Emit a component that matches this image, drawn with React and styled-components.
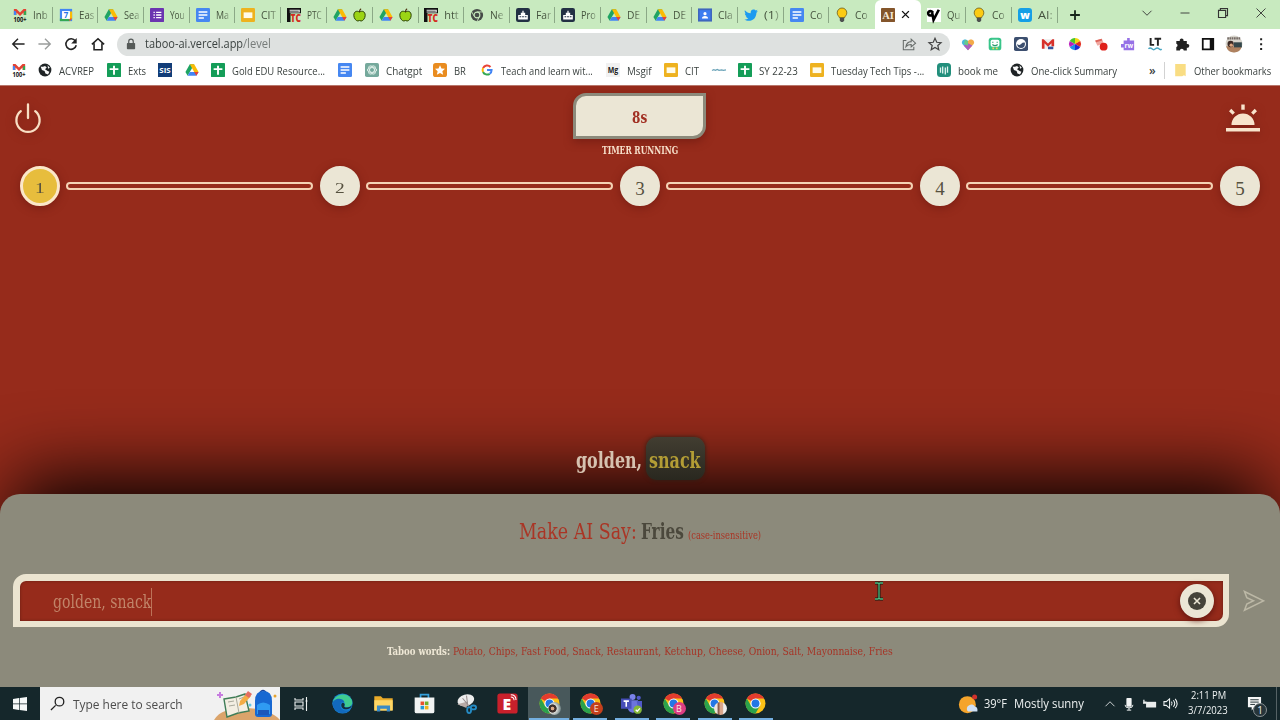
import { useLayoutEffect, useRef, useState } from "react";
import styled, { createGlobalStyle } from "styled-components";

const tabs = [
  ["gmail", "Inb"],
  ["calendar", "Eas"],
  ["drive", "Sea"],
  ["forms", "You"],
  ["docs", "Ma"],
  ["slides", "CIT"],
  ["ptc", "PTC"],
  ["drive", "", "apple"],
  ["drive", "", "apple"],
  ["ptc", "htt"],
  ["chromeDark", "Ne"],
  ["castle", "Far"],
  ["castle", "Pro"],
  ["drive", "DE"],
  ["drive", "DE"],
  ["classroom", "Cla"],
  ["twitter", "(1)"],
  ["docs", "Co"],
  ["bulb", "Co"],
  ["ai", "", "close"],
  ["vv", "Qu"],
  ["bulb", "Co"],
  ["w", "AI:"],
];

// icon, item width, label, label width
const bookmarks = [
  ["gmail", 26],
  ["globe", 69, "ACVREP", 35],
  ["sheets", 51, "Exts", 18],
  ["sis", 27],
  ["drive", 26],
  ["sheets", 127, "Gold EDU Resource...", 93],
  ["docs", 27],
  ["gpt", 68, "Chatgpt", 36],
  ["star", 47, "BR", 12],
  ["google", 126, "Teach and learn wit...", 92],
  ["mg", 58, "Msgif", 25],
  ["slides", 48, "CIT", 14],
  ["script", 26],
  ["sheets", 72, "SY 22-23", 39],
  ["slides", 127, "Tuesday Tech Tips -...", 93],
  ["book", 73, "book me", 40],
  ["globe", 136, "One-click Summary", 86],
];

const extensions = [
  "heart", "bit", "swirl", "mailExt", "wheel", "record", "robot", "lt", "puzzle", "sidebar",
];

const apps = [
  ["taskview"],
  ["edge"],
  ["folder"],
  ["store"],
  ["snip"],
  ["eapp"],
  ["chrome", "photo", true],
  ["chrome", "E"],
  ["teams", null],
  ["chrome", "B"],
  ["chrome", "face"],
  ["chrome", null],
];

export default function App() {
  return (
    <Screen>
      <GlobalStyle />
      <TabStrip />
      <AddressBar />
      <BookmarkBar />
      <Game />
      <TaskBar />
    </Screen>
  );
}

// Squeezes a label to the width of its column
function Fit({ w, children }) {
  const ref = useRef(null);
  const [scale, setScale] = useState(1);
  useLayoutEffect(() => {
    setScale(w / ref.current.offsetWidth);
  }, [w]);
  return (
    <FitBox $w={w}>
      <FitText ref={ref} style={{ transform: `scaleX(${scale})` }}>
        {children}
      </FitText>
    </FitBox>
  );
}

function TabStrip() {
  return (
    <TabBar>
      {tabs.map(([icon, label, extra], i) => (
        <Tab key={i} $active={icon === "ai"} $line={i !== 18 && icon !== "ai"}>
          <Icon name={icon} size={14} />
          {label && (
            <TabLabel>
              <Fit w={label.length === 3 ? 15 : 13}>{label}</Fit>
            </TabLabel>
          )}
          {extra && <Icon name={extra} size={extra === "close" ? 9 : 13} />}
        </Tab>
      ))}
      <NewTab>
        <Icon name="plus" size={12} />
      </NewTab>
      <WindowButtons>
        <Icon name="down" size={12} />
        <Icon name="minimize" size={12} />
        <Icon name="restore" size={12} />
        <Icon name="closeThin" size={12} />
      </WindowButtons>
    </TabBar>
  );
}

function AddressBar() {
  return (
    <Toolbar>
      <NavButtons>
        <Icon name="back" size={14} />
        <Icon name="forward" size={14} />
        <Icon name="reload" size={14} />
        <Icon name="home" size={14} />
      </NavButtons>
      <Omnibox>
        <Icon name="lock" size={12} />
        <Url>
          <Fit w={98}>taboo-ai.vercel.app</Fit>
          <Path>
            <Fit w={28}>/level</Fit>
          </Path>
        </Url>
        <Icon name="share" size={14} />
        <Icon name="starLine" size={14} />
      </Omnibox>
      <Extensions>
        {extensions.map((name) => (
          <Icon key={name} name={name} size={14} />
        ))}
        <Profile>
          <Icon name="avatar" size={18} />
        </Profile>
        <Icon name="dots" size={14} />
      </Extensions>
    </Toolbar>
  );
}

function BookmarkBar() {
  return (
    <Bookmarks>
      {bookmarks.map(([icon, width, label, w], i) => (
        <Bookmark key={i} $w={width}>
          <Icon name={icon} size={14} />
          {label && <Fit w={w}>{label}</Fit>}
        </Bookmark>
      ))}
      <More>»</More>
      <Other>
        <Icon name="note" size={14} />
        <Fit w={77}>Other bookmarks</Fit>
      </Other>
    </Bookmarks>
  );
}

function Game() {
  return (
    <Page>
      <Board>
        <Header>
          <Power viewBox="0 0 32 32">
            <path d="M8.8 9.2a11.6 11.6 0 1 0 14.4 0M16 2.500v13.500" />
          </Power>
          <TimerColumn>
            <Timer>
              <Fit w={15}>8s</Fit>
            </Timer>
            <TimerLabel>
              <Fit w={76}>TIMER RUNNING</Fit>
            </TimerLabel>
          </TimerColumn>
          <Sunrise viewBox="0 0 34 28">
            <path d="M5.500 21a11.500 11.500 0 0 1 23 0zM0 24h34v3.500H0zM15.300 .5h3.400v5.200h-3.400zM3 7.200l2.300-2.400 3.600 3.600-2.300 2.300zM31 7.200l-2.300-2.400-3.600 3.600 2.300 2.300z" />
          </Sunrise>
        </Header>
        <Steps>
          {[1, 2, 3, 4, 5].map((n) => (
            <StepGroup key={n} $last={n === 5}>
              <Step $current={n === 1}>
                <Digit $small={n < 3}>{n}</Digit>
              </Step>
              {n < 5 && <Track />}
            </StepGroup>
          ))}
        </Steps>
        <Words>
          <Fit w={66}>golden,</Fit>
          <Taboo>
            <Fit w={52}>snack</Fit>
          </Taboo>
        </Words>
      </Board>
      <Panel>
        <Target>
          <Fit w={118}>Make AI Say:</Fit>
          <TargetWord>
            <Fit w={43}>Fries</Fit>
          </TargetWord>
          <Hint>
            <Fit w={73}>(case-insensitive)</Fit>
          </Hint>
        </Target>
        <InputRow>
          <Field>
            <Typed>
              <Fit w={98}>golden, snack</Fit>
              <Caret />
            </Typed>
            <Clear>
              <Icon name="clear" size={18} />
            </Clear>
          </Field>
          <Send viewBox="0 0 22 22">
            <path d="M1.500 1.500L20.500 10.800 1.500 20.200 3.800 14 10.500 10.800 3.800 7.600z" />
          </Send>
        </InputRow>
        <TabooList>
          <strong>
            <Fit w={63}>Taboo words:</Fit>
          </strong>
          <Fit w={440}>
            Potato, Chips, Fast Food, Snack, Restaurant, Ketchup, Cheese, Onion, Salt, Mayonnaise, Fries
          </Fit>
        </TabooList>
      </Panel>
      <Pointer viewBox="0 0 12 20">
        <path d="M2 2h3l1 1 1-1h3M6 3v14M2 18h3l1-1 1 1h3" stroke="#101c14" strokeWidth="3" />
        <path d="M2 2h3l1 1 1-1h3M6 3v14M2 18h3l1-1 1 1h3" stroke="#4fb87c" strokeWidth="1.300" />
      </Pointer>
    </Page>
  );
}

function TaskBar() {
  return (
    <Taskbar>
      <Start>
        <Icon name="windows" size={16} />
      </Start>
      <Search>
        <Icon name="search" size={15} />
        <Fit w={110}>Type here to search</Fit>
        <SearchArt viewBox="0 0 66 32">
          <path d="M0 32c5-9 17-12 30-12 14 0 28 3 36 12z" fill="#dba46b" />
          <path d="M10 11l12-2 9-3 4 17-11 2-11 4z" fill="#f3eee2" stroke="#3f7d57" strokeWidth="1.400" />
          <path d="M22 9l3 16M14 14l6-1M15 18l6-1M25 11l5-2M26 15l5-1" stroke="#a9a99b" />
          <path d="M25 18l1-5 7-8 4 3-7 8z" fill="#f4ac45" />
          <path d="M31 7l3-4 4 3-3 4z" fill="#e46d62" />
          <path d="M6 4v6M3 7h6" stroke="#c77ce0" strokeWidth="2" />
          <path d="M45 6q4-7 8 0" fill="none" stroke="#17439b" strokeWidth="1.500" />
          <path d="M41 13q0-10 8.500-10T58 13v13q0 3-3 3H44q-3 0-3-3z" fill="#1768d2" />
          <path d="M43 17q6-5 13 0v9H43z" fill="#2f9bf2" />
          <path d="M44 22h11v5H44z" fill="#1b57ba" />
          <circle cx="61" cy="8" r="1.500" fill="#e6a32d" />
          <circle cx="36" cy="17" r="1.500" fill="#65c7e4" />
        </SearchArt>
      </Search>
      <Apps>
        {apps.map(([icon, badge, active], i) => (
          <AppButton key={i} $active={active} $open={badge !== undefined}>
            <Icon name={icon} size={icon === "taskview" ? 16 : 21} />
            {badge && (
              <Badge $kind={badge}>{badge.length === 1 ? badge : ""}</Badge>
            )}
          </AppButton>
        ))}
      </Apps>
      <Weather>
        <Icon name="weather" size={20} />
        <Fit w={23}>39°F</Fit>
        <Fit w={70}>Mostly sunny</Fit>
      </Weather>
      <Tray>
        <Icon name="up" size={12} />
        <Icon name="mic" size={14} />
        <Icon name="battery" size={14} />
        <Icon name="speaker" size={15} />
      </Tray>
      <Clock>
        <Fit w={35}>2:11 PM</Fit>
        <Fit w={40}>3/7/2023</Fit>
      </Clock>
      <Notify>
        <Icon name="message" size={15} />
        <Count>1</Count>
      </Notify>
      <ShowDesktop />
    </Taskbar>
  );
}

function Icon({ name, size }) {
  return (
    <Svg viewBox="0 0 16 16" $size={size}>
      {icons[name]}
    </Svg>
  );
}

const line = { fill: "none", stroke: "#222", strokeWidth: 1.6 };
const thin = { fill: "none", stroke: "#333", strokeWidth: 1.2 };
const white = { fill: "none", stroke: "#eef2f2", strokeWidth: 1.1 };

const icons = {
  gmail: (
    <>
      <path d="M1 1l3 0 4 4 4-4h3v7h-3V5L8 9 4 5v3H1z" fill="#e34234" />
      <path d="M1 3v5h2.500V4z" fill="#4285f4" />
      <path d="M15 3v5h-2.500V4z" fill="#34a853" />
      <text x="8" y="15.500" textAnchor="middle" fontSize="8" fontWeight="700" fill="#111" textLength="15" lengthAdjust="spacingAndGlyphs">100+</text>
    </>
  ),
  calendar: (
    <>
      <path d="M1 1h14v14H1z" fill="#4285f4" />
      <path d="M12 4h3v8l-3 3z" fill="#fbbc04" />
      <path d="M1 12h11v3H1z" fill="#34a853" />
      <path d="M12 12h3l-3 3z" fill="#ea4335" />
      <path d="M3.500 3.500h9v9h-9z" fill="#fff" />
      <text x="8" y="11.500" textAnchor="middle" fontSize="9" fontWeight="700" fill="#2673e8">7</text>
    </>
  ),
  drive: (
    <>
      <path d="M5.500 1.500h5L8 6 3 14.500.5 10.200z" fill="#1fa463" />
      <path d="M5.500 1.500h5l5 8.700h-5z" fill="#fbbc04" />
      <path d="M5.500 10.200h10L13 14.500H3z" fill="#4285f4" />
      <path d="M15.500 10.200L13 14.500l-2.500-4.300z" fill="#ea4335" />
    </>
  ),
  apple: (
    <>
      <path d="M8 5c3-2 7-1 7 4 0 4-3 7-5 7l-2-.6L6 16c-2 0-5-3-5-7 0-5 4-6 7-4z" fill="#9bd414" stroke="#283f05" strokeWidth="1.200" />
      <path d="M8 5q0-3 2-4" fill="none" stroke="#4a2d0a" strokeWidth="1.500" />
    </>
  ),
  forms: (
    <>
      <rect x="0" y="0" width="16" height="16" rx="1" fill="#6b35b0" />
      <path d="M4 5h1.500M4 8h1.500M4 11h1.500M7 5h6M7 8h6M7 11h6" stroke="#fff" strokeWidth="1.600" />
    </>
  ),
  docs: (
    <>
      <rect width="16" height="16" rx="1.500" fill="#4687f1" />
      <path d="M3 4.500h10M3 8h10M3 11.500h6" stroke="#fff" strokeWidth="1.700" />
    </>
  ),
  slides: (
    <>
      <rect width="16" height="16" rx="1.500" fill="#eeb21f" />
      <rect x="3" y="5" width="10" height="6.500" fill="#fffbe8" />
    </>
  ),
  sheets: (
    <>
      <rect width="16" height="16" rx="1" fill="#149d58" />
      <path d="M8 3v10.500M3 7h10" stroke="#fff" strokeWidth="2.200" />
    </>
  ),
  ptc: (
    <>
      <path d="M0 0h16v6H4v10H0z" fill="#111" />
      <path d="M3 2.500h11v2H3" fill="none" stroke="#eee" strokeWidth="1.200" />
      <text x="4" y="15.500" fontSize="11" fontWeight="900" fill="#d42b20" textLength="12" lengthAdjust="spacingAndGlyphs">TC</text>
    </>
  ),
  chromeDark: (
    <>
      <circle cx="8" cy="8" r="7" fill="#454a47" />
      <path d="M8 4.500h6.500M5 9.800L2 4.500M11 9.800L8 15" stroke="#c8eabf" strokeWidth="1" />
      <circle cx="8" cy="8" r="3.300" fill="#454a47" stroke="#c8eabf" strokeWidth="1.200" />
    </>
  ),
  castle: (
    <>
      <rect width="16" height="16" rx="2.500" fill="#223044" />
      <path d="M2.500 13V8h3V5.500h1.800V3h1.400v2.500h1.800V8h3v5z" fill="#fff" />
      <path d="M4 10h2M7 10h2M10 10h2" stroke="#223044" strokeWidth="1.200" />
    </>
  ),
  classroom: (
    <>
      <rect width="16" height="15" y=".5" fill="#3f66bd" />
      <rect x="1.800" y="2.500" width="12.400" height="11" fill="#3d7df0" />
      <circle cx="8" cy="6.500" r="1.800" fill="#fff" />
      <path d="M4.500 12q0-3 3.500-3t3.500 3z" fill="#fff" />
    </>
  ),
  twitter: (
    <path d="M1 2.500c2 2.300 4 3.300 6.600 3.500C7.200 3 9 1.500 11 1.700c1 0 2 .6 2.500 1.100l2-.8-1.300 2 1.700-.4-1.700 1.700C14 11 10.500 14.500 5.500 14.500c-2 0-3.800-.5-5-1.500 2 0 3.300-.4 4.500-1.400-1.500-.2-2.500-1-3-2.200h1.300C1.700 8.700 1 7.600 1 6l1.300.4C.8 5.200.5 3.800 1 2.500z" fill="#1d9bf0" />
  ),
  bulb: (
    <>
      <path d="M5 11C4.500 9 2.500 8.500 2.500 5.500a5.500 5.500 0 0 1 11 0C13.500 8.500 11.500 9 11 11z" fill="#fccb14" stroke="#5b4a10" strokeWidth=".8" />
      <path d="M5.500 11h5v3.500L9 16H7l-1.500-1.500z" fill="#4e5150" />
    </>
  ),
  ai: (
    <>
      <rect width="16" height="16" rx="1" fill="#84552b" />
      <text x="8" y="12.500" textAnchor="middle" fontSize="12" fontFamily="Liberation Serif, serif" fontWeight="700" fill="#f5e8d6">AI</text>
    </>
  ),
  close: <path d="M2 2l12 12M14 2L2 14" stroke="#111" strokeWidth="2.500" />,
  vv: (
    <>
      <rect width="16" height="16" fill="#fff" />
      <path d="M7 5.500C4 2 .8 4 1.500 7c.8 2.500 4.500 2 4.500-1l1.500 7.500L13.500 2" fill="none" stroke="#000" strokeWidth="3" />
    </>
  ),
  w: (
    <>
      <rect width="16" height="16" rx="3.500" fill="#159fe6" />
      <text x="8" y="12" textAnchor="middle" fontSize="12" fontWeight="800" fill="#fff">w</text>
    </>
  ),
  plus: <path d="M8 1.500v13M1.500 8h13" stroke="#16261a" strokeWidth="2.400" />,
  down: <path d="M2 5l6 6 6-6" {...thin} />,
  up: <path d="M2 11l6-6 6 6" {...white} />,
  minimize: <path d="M2 8h12" {...thin} />,
  restore: <path d="M2 4.500h9.500V14H2zM4.500 4V2H14v9.500h-2.500" {...thin} strokeWidth="1.500" />,
  closeThin: <path d="M2 2l12 12M14 2L2 14" {...thin} />,
  back: <path d="M15.500 8H2.500M8 2L2 8l6 6" {...line} />,
  forward: <path d="M.5 8h13M8 2l6 6-6 6" {...line} stroke="#9a9d9c" />,
  reload: (
    <>
      <path d="M13 4.500A6 6 0 1 0 14 9.500" {...line} strokeWidth="1.800" />
      <path d="M14.500 1v6.300H8.200z" fill="#222" />
    </>
  ),
  home: <path d="M1 8.500l7-6.500 7 6.500M3.500 7v7.500h9V7" {...line} strokeWidth="1.800" />,
  lock: (
    <>
      <rect x="2.500" y="6.500" width="11" height="8.500" rx="1" fill="#555a58" />
      <path d="M5 7V4.500a3 3 0 0 1 6 0V7" fill="none" stroke="#555a58" strokeWidth="1.600" />
    </>
  ),
  share: <path d="M5 4H1.500v10.500h12V11M4.500 11c.5-3.500 2.500-5.500 6-5.700V2.500l5 4.500-5 4.300V8.500c-3 0-4.500.7-6 2.500z" {...thin} stroke="#666b69" />,
  starLine: <path d="M8 1.500l2 4.500 4.900.5-3.700 3.200 1.100 4.800L8 12l-4.300 2.500 1.100-4.800L1.100 6.500 6 6z" {...line} strokeWidth="1.400" stroke="#444" />,
  heart: (
    <>
      <path d="M8 15L1.500 8C-.5 4.500 4 .5 8 4.500z" fill="#48b9dc" />
      <path d="M8 15l6.500-7C16.500 4.500 12 .5 8 4.500z" fill="#f3aa49" />
      <path d="M3 9.600L8 7l5 2.600L8 15z" fill="#ad60bd" />
      <path d="M8 4.500L4.500 3l-1 5L8 10z" fill="#67c98a" />
    </>
  ),
  bit: (
    <>
      <rect x=".8" y=".8" width="14.400" height="14.400" rx="3" fill="#39c58a" />
      <rect x="3" y="3" width="10" height="8" rx="2" fill="#fff" />
      <path d="M5.500 5.500v1M10.500 5.500v1M5 8.500q3 2.500 6 0" {...line} stroke="#2a9c6d" strokeWidth="1.400" />
      <path d="M5 13h2M9 13h2" stroke="#f1d15c" strokeWidth="2" />
    </>
  ),
  swirl: (
    <>
      <rect width="16" height="16" rx="2" fill="#3c4f6f" />
      <circle cx="8" cy="8" r="5.700" fill="#fff" />
      <path d="M3.500 8q2.500 2 4.500 0t4.500-1.500Q13 12.500 8 12.500 4 12.500 3.500 8z" fill="#3c4f6f" />
    </>
  ),
  mailExt: (
    <>
      <path d="M1 2.500h14v11H1z" fill="#eee" />
      <path d="M1 2.500h2l5 5 5-5h2v8h-3V7l-4 4-4-4v6.500H1z" fill="#d7312b" />
      <path d="M8 11h6v3H8z" fill="#34529b" />
    </>
  ),
  wheel: (
    <>
      <path d="M8 8V1a7 7 0 0 1 6 3.500z" fill="#f3d712" />
      <path d="M8 8l6-3.500a7 7 0 0 1 0 7z" fill="#e32d20" />
      <path d="M8 8l6 3.500A7 7 0 0 1 8 15z" fill="#2227d4" />
      <path d="M8 8v7a7 7 0 0 1-6-3.500z" fill="#2092e8" />
      <path d="M8 8l-6 3.500a7 7 0 0 1 0-7z" fill="#ba1fbd" />
      <path d="M8 8L2 4.500A7 7 0 0 1 8 1z" fill="#46c52c" />
    </>
  ),
  record: (
    <>
      <path d="M1 4l8-2 2 5-7 3z" fill="#f0a7a0" />
      <path d="M2 5l7-2" stroke="#dc6259" strokeWidth="2" />
      <circle cx="11" cy="11" r="4.500" fill="#df211b" />
    </>
  ),
  robot: (
    <>
      <path d="M7 1h3v3h5v11H3v-3H0V8h3V4h4z" fill="#9671e6" />
      <text x="9" y="12" textAnchor="middle" fontSize="7.500" fontWeight="700" fill="#fff">rw</text>
    </>
  ),
  lt: (
    <>
      <path d="M3 1v8h4M7.500 2H15M11.300 2v8" fill="none" stroke="#222" strokeWidth="2.200" />
      <path d="M.5 13.500q2-2 4 0t4 0 4 0 3 0" fill="none" stroke="#48a6c2" strokeWidth="1.600" />
    </>
  ),
  puzzle: <path d="M1.500 4.500h4a2.200 2.200 0 1 1 4.200 0h3.800V8a2.200 2.200 0 1 1 0 4.200v3.300H10a2.200 2.200 0 0 0-4.400 0H1.500v-4a2 2 0 0 0 0-3.800z" fill="#222" />,
  sidebar: (
    <>
      <path d="M2 2h12v12H2z" fill="none" stroke="#111" strokeWidth="2" />
      <path d="M10 2h4v12h-4z" fill="#111" />
    </>
  ),
  avatar: (
    <>
      <circle cx="8" cy="8" r="7.500" fill="#d8d5cd" />
      <path d="M2 3h12" stroke="#756b66" strokeWidth="2" strokeDasharray="1.500 .5" />
      <path d="M1 10h14q-1.500 5.500-7 5.500T1 10z" fill="#af8260" />
      <circle cx="5" cy="8" r="2.800" fill="#3c2a25" />
      <circle cx="5.500" cy="9" r="1.500" fill="#dda782" />
      <path d="M8 6.500h7V11H8z" fill="#34474b" />
    </>
  ),
  dots: <path d="M7 1.500h2.300v2.300H7zM7 7h2.300v2.300H7zM7 12.500h2.300v2.300H7z" fill="#222" />,
  globe: (
    <>
      <circle cx="8" cy="8" r="7.300" fill="#1e2325" />
      <path d="M3 4q3 1 5-.5L10 5l-2 2 3 2 2 1-1.500 3-3-1-1-3-3-1z" fill="#f8f8f8" />
      <path d="M11 2.500l2.500 3-2 1z" fill="#f8f8f8" />
    </>
  ),
  sis: (
    <>
      <rect width="16" height="16" fill="#123d78" />
      <text x="8" y="11" textAnchor="middle" fontSize="8" fontWeight="700" fill="#fff" textLength="13" lengthAdjust="spacingAndGlyphs">SIS</text>
    </>
  ),
  gpt: (
    <>
      <rect width="16" height="16" rx="2" fill="#75a99c" />
      <g fill="none" stroke="#e5f3ed" strokeWidth="1">
        <ellipse cx="8" cy="8" rx="5.300" ry="2.700" />
        <ellipse cx="8" cy="8" rx="5.300" ry="2.700" transform="rotate(60 8 8)" />
        <ellipse cx="8" cy="8" rx="5.300" ry="2.700" transform="rotate(120 8 8)" />
      </g>
    </>
  ),
  star: (
    <>
      <rect width="16" height="16" rx="3" fill="#e98c20" />
      <path d="M8 2.500l1.700 3.800 4 .4-3 2.700.9 4L8 11.300l-3.600 2.100.9-4-3-2.700 4-.4z" fill="#fff" />
    </>
  ),
  google: (
    <g fill="none" strokeWidth="2.600" transform="translate(1 1) scale(.88)">
      <path d="M12.500 4A6 6 0 0 0 2.800 5.500" stroke="#ea4335" />
      <path d="M2.800 5.500a6 6 0 0 0 0 5" stroke="#fbbc04" />
      <path d="M2.800 10.500a6 6 0 0 0 8.700 2.400" stroke="#34a853" />
      <path d="M11.500 12.900A6 6 0 0 0 13.900 8H8" stroke="#4285f4" />
    </g>
  ),
  mg: (
    <>
      <rect width="16" height="16" fill="#f1f1f1" />
      <text x="8" y="11.500" textAnchor="middle" fontSize="9" fontWeight="700" fill="#222" textLength="12" lengthAdjust="spacingAndGlyphs">Mg</text>
    </>
  ),
  script: <path d="M0 8.500l2-1 2 .8 2-1 2 1 3-.5 2 .7 3-.6" fill="none" stroke="#6aa3b8" strokeWidth="1.400" />,
  book: (
    <>
      <rect width="16" height="16" rx="4" fill="#228f7c" />
      <path d="M4 5v6M6.500 4v8M9.500 5v8M12 4v7" stroke="#e1f3ef" strokeWidth="1.500" />
    </>
  ),
  note: <path d="M2.500 1h12v14l-2-1-2 1h-8z" fill="#f9dd83" />,
  clear: (
    <>
      <circle cx="8" cy="8" r="8" fill="#45433a" />
      <path d="M5.300 5.300l5.400 5.400M10.700 5.300l-5.400 5.400" stroke="#ebe6d5" strokeWidth="1.400" />
    </>
  ),
  windows: <path d="M1 3l6-.9v5.500H1zM7.700 2L15 1v6.600H7.700zM1 8.300h6v5.600L1 13zM7.700 8.300H15V15l-7.300-1z" fill="#f5f8f8" />,
  search: <path d="M1 15l5-5M5.500 6a4.600 4.600 0 1 0 9.200 0 4.600 4.600 0 1 0-9.200 0" {...line} strokeWidth="1.400" />,
  taskview: <path d="M2 2v2h8V2M2 14v-2h8v2M2 6h8v4H2zM13.500 1v14M12.500 5h2" {...white} />,
  edge: (
    <>
      <circle cx="8" cy="8" r="7.700" fill="#1782d2" />
      <path d="M1 6C3 0 13-1 15.300 6c.8 4-3 5.500-6 4.200C11 8 8.500 5.200 5.500 5.500 3.500 5.500 2 6.500.5 8.500z" fill="#3fcc91" />
      <path d="M.3 8C1 4 8 3 9.500 7 7 6.500 6 8.200 6.500 10.500c1 3 4 3.500 7.500 2.200-4 5-13 2.500-13.700-4.700z" fill="#1269bd" />
      <path d="M8.200 7.500c2 .5 1.500 2 1 2.700 1.500 1.500 4 1 6-.6-1.200 3.700-7 3.600-8 .6-.3-1.300 0-2.300 1-2.700z" fill="#15303a" />
    </>
  ),
  folder: (
    <>
      <path d="M1 2.500h5L7.500 4H15v9H1z" fill="#e9ab2a" />
      <path d="M1 5.500h14v8H1z" fill="#ffd765" />
      <path d="M3 14V9.500h10V14h-2.500v-2h-5v2z" fill="#3b8bc5" />
    </>
  ),
  store: (
    <>
      <path d="M5 4V1.300h6V4" fill="none" stroke="#34a0dc" strokeWidth="1.300" />
      <path d="M.5 3.500h15V14q0 1.500-1.500 1.500H2Q.5 15.500.5 14z" fill="#f1f3f3" />
      <path d="M5 6.500h2.700v2.700H5z" fill="#e9502d" />
      <path d="M8.300 6.500H11v2.700H8.300z" fill="#6fb02a" />
      <path d="M5 9.800h2.700v2.700H5z" fill="#229ad6" />
      <path d="M8.300 9.800H11v2.700H8.300z" fill="#f0b31b" />
    </>
  ),
  snip: (
    <>
      <ellipse cx="7.500" cy="5.500" rx="6.500" ry="4.300" fill="#ececec" transform="rotate(-15 7.500 5.500)" />
      <path d="M1 8.500l7 3 1-5" fill="#b8aaa6" />
      <path d="M8 2l1 8M5 4l5 6" stroke="#998e8e" strokeWidth=".8" />
      <g fill="none" stroke="#258bc4" strokeWidth="1.400">
        <ellipse cx="10" cy="13" rx="1.500" ry="2.300" />
        <ellipse cx="13.300" cy="11" rx="2" ry="1.500" />
      </g>
    </>
  ),
  eapp: (
    <>
      <rect x=".3" y=".3" width="15.400" height="15.400" rx="2" fill="#c9202b" />
      <text x="7.500" y="13" textAnchor="middle" fontSize="12" fontWeight="800" fill="#fff">E</text>
      <path d="M10.500 3q2.500 0 2.500 2.500M10.500 1.300q4 0 4 4" fill="none" stroke="#fff" strokeWidth=".8" />
    </>
  ),
  chrome: (
    <>
      <circle cx="8" cy="8" r="7.600" fill="#fbc116" />
      <path d="M8 8L1.400 4.200A7.600 7.600 0 0 1 14.600 4.200H8z" fill="#e33b2e" />
      <path d="M1.400 4.200A7.600 7.600 0 0 0 8 15.600L11.300 9.900H4.700z" fill="#2ba24c" />
      <circle cx="8" cy="8" r="3.900" fill="#fff" />
      <circle cx="8" cy="8" r="3" fill="#2477e5" />
    </>
  ),
  teams: (
    <>
      <circle cx="8.800" cy="3" r="2.300" fill="#7b83eb" />
      <circle cx="13.500" cy="3.700" r="1.600" fill="#5059c9" />
      <path d="M5 5.500h8v6q-1 3.500-4 3.500t-4-3.500z" fill="#6c74dd" />
      <path d="M12 6h4v5q-1 2-3 2z" fill="#5059c9" />
      <rect y="4.200" width="8" height="7.800" fill="#464eb8" />
      <path d="M2 6.200h4M4 6.200v4.300" stroke="#fff" strokeWidth="1.200" />
      <circle cx="12.700" cy="12.700" r="3.200" fill="#84b838" />
      <path d="M11.200 12.700l1.200 1.200 2-2.200" fill="none" stroke="#fff" />
    </>
  ),
  weather: (
    <>
      <circle cx="7.500" cy="8.500" r="6.800" fill="#f5a42b" />
      <path d="M8 14a3 3 0 0 1 1-5 3 3 0 0 1 4.500 1q2.500.5 2 4z" fill="#cfe0f4" />
      <circle cx="13.300" cy="2.300" r="2" fill="#cf302c" />
    </>
  ),
  mic: (
    <>
      <rect x="5" y="1" width="6" height="10" rx="1" fill="#f2f4f4" />
      <path d="M3.500 9q0 3.500 4.500 3.500T12.500 9M8 12v3M5.500 15h5" {...white} />
    </>
  ),
  battery: (
    <>
      <path d="M3.500 5.500H15V12H3.500z" fill="#e9eded" />
      <path d="M1 3v3h3M0 7h4" stroke="#e9eded" strokeWidth="1.500" fill="none" />
    </>
  ),
  speaker: <path d="M1 6h2.500L7 3v10l-3.500-3H1zM9 6q1.500 2 0 4M11 4.500q3 3.500 0 7M13 3q4 5 0 10" {...white} />,
  message: (
    <>
      <path d="M1 1h14v11H8l-3 3.500V12H1z" fill="#f4f5f5" />
      <path d="M3.500 4h9M3.500 6.500h9M3.500 9h5" stroke="#1b2b2f" strokeWidth="1" />
    </>
  ),
};

const GlobalStyle = createGlobalStyle`
  body {
    margin: 0;
    overflow: hidden;
  }
`;

const Screen = styled.div`
  width: 1280px;
  height: 720px;
  display: flex;
  flex-direction: column;
  font-family: "Open Sans", "Noto Sans", sans-serif;
  font-size: 11px;
  color: #3c4341;
  overflow: hidden;
  * {
    box-sizing: border-box;
  }
`;
const Svg = styled.svg`
  width: ${(p) => p.$size}px;
  height: ${(p) => p.$size}px;
  flex-shrink: 0;
  display: block;
  overflow: visible;
`;
const FitBox = styled.span`
  display: inline-block;
  width: ${(p) => p.$w}px;
  flex-shrink: 0;
  white-space: nowrap;
`;
const FitText = styled.span`
  display: inline-block;
  transform-origin: 0 50%;
`;

const TabBar = styled.div`
  height: 29px;
  display: flex;
  padding-left: 7px;
  background: #c8eabf;
`;
const Tab = styled.div`
  width: 45.700px;
  height: 29px;
  display: flex;
  align-items: center;
  gap: 6px;
  padding-left: 6px;
  flex-shrink: 0;
  background: ${(p) => (p.$active ? "#fff" : "none")};
  border-radius: 6px 6px 0 0;
  &::after {
    content: "";
    width: 1px;
    height: 16px;
    margin-left: auto;
    background: ${(p) => (p.$line ? "#8ba886" : "transparent")};
  }
`;
const TabLabel = styled.span`
  margin-right: -6px;
  color: #46543f;
  mask-image: linear-gradient(90deg, #000 60%, #0005);
`;
const NewTab = styled.div`
  display: flex;
  align-items: center;
  padding-left: 11px;
`;
const WindowButtons = styled.div`
  margin-left: auto;
  padding: 0 13px 3px 0;
  display: flex;
  align-items: center;
  gap: 26px;
`;

const Toolbar = styled.div`
  height: 30px;
  display: flex;
  align-items: center;
  background: #fff;
`;
const NavButtons = styled.div`
  width: 117px;
  display: flex;
  gap: 12.700px;
  padding-left: 11px;
`;
const Omnibox = styled.div`
  width: 833px;
  height: 23px;
  display: flex;
  align-items: center;
  gap: 12px;
  padding: 0 8px;
  border-radius: 12px;
  background: #dee1e0;
`;
const Url = styled.div`
  flex: 1;
  display: flex;
  margin-left: -4px;
  padding-bottom: 1px;
  font-size: 12px;
`;
const Path = styled.span`
  color: #777c7a;
`;
const Extensions = styled.div`
  display: flex;
  align-items: center;
  gap: 12.700px;
  padding-left: 11px;
`;
const Profile = styled.div`
  margin: 0 -2.500px;
`;

const Bookmarks = styled.div`
  height: 27px;
  display: flex;
  align-items: center;
  padding: 0 0 4px 12px;
  background: #fff;
  border-bottom: 1px solid #b8766b;
`;
const Bookmark = styled.div`
  width: ${(p) => p.$w}px;
  display: flex;
  align-items: center;
  gap: 6.500px;
  flex-shrink: 0;
`;
const More = styled.span`
  width: 19px;
  padding-left: 3px;
  font-size: 12px;
  font-weight: 600;
  border-right: 1px solid #d2d2d2;
`;
const Other = styled.div`
  display: flex;
  align-items: center;
  gap: 7px;
  padding-left: 8px;
`;

const Page = styled.div`
  height: 601px;
  flex-shrink: 0;
  position: relative;
  display: flex;
  flex-direction: column;
  background: #962b1b;
  font-family: "DejaVu Serif Condensed", "DejaVu Serif", serif;
  font-stretch: condensed;
`;
const Board = styled.div`
  height: 408px;
  display: flex;
  flex-direction: column;
  padding-top: 7px;
`;
const Header = styled.div`
  display: flex;
  justify-content: space-between;
  align-items: flex-start;
  padding: 0 20px 0 12px;
`;
const Power = styled.svg`
  width: 32px;
  height: 32px;
  margin: 9px 102px 0 0;
  fill: none;
  stroke: #f8dfc4;
  stroke-width: 2.300;
  stroke-linecap: round;
  filter: drop-shadow(0 2px 4px #6a170fa0);
`;
const TimerColumn = styled.div`
  display: flex;
  flex-direction: column;
  align-items: center;
  margin-left: -93px;
`;
const Timer = styled.div`
  width: 133px;
  height: 46px;
  display: flex;
  align-items: center;
  justify-content: center;
  padding-top: 2px;
  border: 3px solid #8c8a7b;
  border-radius: 13px 0 13px 0;
  background: #ebe6d5;
  color: #a23124;
  font-size: 17px;
  font-weight: 700;
  box-shadow: 0 3px 8px #65150e90;
`;
const TimerLabel = styled.div`
  height: 27px;
  padding-top: 4px;
  color: #f6dfca;
  font-size: 11px;
  line-height: 15px;
  font-weight: 700;
`;
const Sunrise = styled.svg`
  width: 34px;
  height: 28px;
  margin-top: 11px;
  fill: #f8e4cc;
  filter: drop-shadow(0 2px 4px #6a170fa0);
`;
const Steps = styled.div`
  display: flex;
  padding: 0 20px;
`;
const StepGroup = styled.div`
  display: flex;
  align-items: center;
  flex: ${(p) => (p.$last ? "none" : 1)};
`;
const Step = styled.div`
  width: 40px;
  height: 40px;
  display: flex;
  justify-content: center;
  border: 3px solid ${(p) => (p.$current ? "#fbe7c9" : "#ebe6d5")};
  border-radius: 50%;
  background: ${(p) => (p.$current ? "#e7bd3d" : "#ebe6d5")};
  box-shadow: 0 2px 8px #65150e90;
`;
const Digit = styled.span`
  font-family: "Liberation Serif", serif;
  color: #56513f;
  font-size: ${(p) => (p.$small ? 15 : 19)}px;
  line-height: ${(p) => (p.$small ? 38 : 39)}px;
  transform: scaleX(${(p) => (p.$small ? 1.3 : 1)});
`;
const Track = styled.div`
  flex: 1;
  height: 8px;
  margin: 0 7px 0 6px;
  border: 2px solid #f5d3b5;
  border-radius: 4px;
`;
const Words = styled.div`
  margin-top: auto;
  height: 57px;
  display: flex;
  justify-content: center;
  align-items: flex-start;
  gap: 4px;
  color: #d6c2b0;
  font-size: 22.500px;
  line-height: 46px;
  font-weight: 700;
  position: relative;
  z-index: 1;
`;
const Taboo = styled.span`
  height: 43px;
  padding: 0 4px 0 3px;
  border-radius: 11px;
  background: linear-gradient(#423d31, #29281f);
  color: #b39d35;
  box-shadow: 0 0 4px #2b2116;
`;

const Panel = styled.div`
  flex: 1;
  display: flex;
  flex-direction: column;
  border-radius: 20px 20px 0 0;
  background: #8c8a7b;
  box-shadow: 0 -29px 76px -14px #000;
  clip-path: inset(-160px 0 0 0);
`;
const Target = styled.div`
  height: 80px;
  display: flex;
  justify-content: center;
  align-items: baseline;
  gap: 4px;
  padding-top: 23px;
  color: #aa3525;
  font-size: 23px;
  line-height: 28px;
`;
const TargetWord = styled.span`
  color: #4b483c;
  font-weight: 700;
`;
const Hint = styled.span`
  font-size: 11px;
`;
const InputRow = styled.div`
  display: flex;
  align-items: center;
  gap: 14px;
  padding-left: 13px;
`;
const Field = styled.div`
  width: 1215.500px;
  height: 53px;
  display: flex;
  align-items: center;
  justify-content: space-between;
  padding: 0 9px 0 33px;
  border: 7px solid #ebe4d0;
  border-bottom-width: 6px;
  border-right-width: 6px;
  border-radius: 13px 0 13px 0;
  background: #962b1b;
  box-shadow: inset 0 0 3px #631d13;
`;
const Typed = styled.div`
  display: flex;
  align-items: center;
  padding-top: 1px;
  color: #c18469;
  font-size: 18.500px;
`;
const Caret = styled.span`
  width: 1px;
  height: 28px;
  background: #bd7258;
`;
const Clear = styled.div`
  width: 34px;
  height: 34px;
  display: flex;
  align-items: center;
  justify-content: center;
  border-radius: 50%;
  background: #ebe6d5;
  box-shadow: 0 2px 6px #5d140e;
`;
const Send = styled.svg`
  width: 22px;
  height: 22px;
  fill: none;
  stroke: #bcb8a6;
  stroke-width: 1.500;
`;
const TabooList = styled.div`
  display: flex;
  justify-content: center;
  gap: 3px;
  padding-top: 16px;
  color: #a63426;
  font-size: 11.500px;
  line-height: 16px;
  strong {
    color: #eee7d5;
  }
`;
// Text cursor hovering over the field
const Pointer = styled.svg`
  width: 12px;
  height: 20px;
  position: absolute;
  left: 873px;
  top: 495px;
  z-index: 2;
  fill: none;
`;

const Taskbar = styled.div`
  flex: 1;
  display: flex;
  align-items: stretch;
  background: #15272b;
  color: #edf1f1;
  font-size: 12px;
`;
const Start = styled.div`
  width: 40px;
  display: flex;
  align-items: center;
  justify-content: center;
`;
const Search = styled.div`
  width: 240px;
  display: flex;
  align-items: center;
  gap: 8px;
  padding-left: 10px;
  background: #f1f1f1;
  color: #4d4d4d;
  font-size: 13px;
`;
const SearchArt = styled.svg`
  width: 66px;
  height: 32px;
  margin-left: auto;
  fill: none;
`;
const Apps = styled.div`
  display: flex;
`;
const AppButton = styled.div`
  width: 41.400px;
  display: flex;
  align-items: center;
  justify-content: center;
  position: relative;
  background: ${(p) => (p.$active ? "#48585b" : "none")};
  &::after {
    content: "";
    position: absolute;
    bottom: 0;
    width: ${(p) => (p.$active ? 40 : 34)}px;
    height: 2px;
    background: ${(p) => (p.$open ? "#74afe0" : "transparent")};
  }
`;
const badgeColors = {
  E: "#c5401c",
  B: "#db3d83",
  photo: "radial-gradient(circle at 35% 50%, #dda986 15%, #3d302c 20%, #3d302c 35%, #d9dcd8 42%, #5d7376 85%)",
  face: "linear-gradient(90deg, #efe3dc 25%, #75483b 30%, #d9a68c 50%, #d9a68c 65%, #eee 75%)",
};
const Badge = styled.span`
  position: absolute;
  left: 20px;
  bottom: 5px;
  width: 13px;
  height: 13px;
  border-radius: 50%;
  background: ${(p) => badgeColors[p.$kind]};
  color: #fbe6df;
  font-size: 9px;
  line-height: 13px;
  text-align: center;
`;
const Weather = styled.div`
  display: flex;
  align-items: center;
  gap: 7px;
  margin-left: auto;
  > :first-child {
    margin-right: -1px;
  }
`;
const Tray = styled.div`
  display: flex;
  align-items: center;
  gap: 6.500px;
  padding-left: 20px;
`;
const Clock = styled.div`
  width: 60px;
  display: flex;
  flex-direction: column;
  align-items: center;
  padding-top: 1px;
  font-size: 10.500px;
  line-height: 15px;
`;
const Notify = styled.div`
  width: 37px;
  display: flex;
  align-items: center;
  justify-content: center;
  position: relative;
  padding-right: 4px;
`;
const Count = styled.span`
  position: absolute;
  left: 15px;
  bottom: 3px;
  width: 14px;
  height: 14px;
  border: 1px solid #8a9294;
  border-radius: 50%;
  background: #26353a;
  font-size: 10px;
  line-height: 12px;
  text-align: center;
`;
const ShowDesktop = styled.div`
  width: 4px;
  margin-left: 1px;
  border-left: 1px solid #556265;
`;
